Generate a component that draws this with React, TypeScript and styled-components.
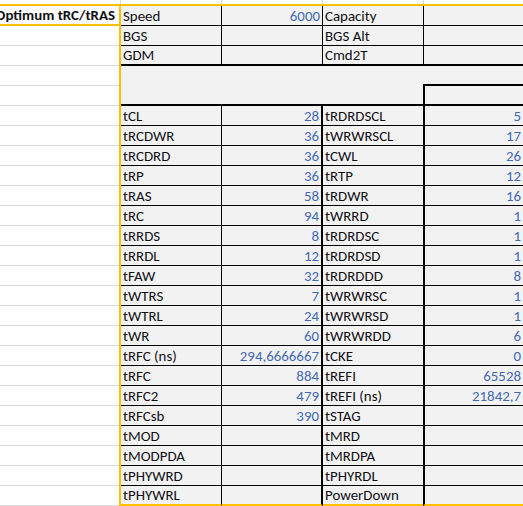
import React from "react";
import styled, { createGlobalStyle } from "styled-components";

const ORANGE = "#ffc000";
const GRID = "#d9d9d9";
const INK = "#0f0f14";
const NUM = "#4468b4";

const GlobalStyle = createGlobalStyle`
  html, body {
    margin: 0;
    padding: 0;
    background: #ffffff;
    overflow: hidden;
  }
  body {
    font-family: "Carlito", Lato, "Liberation Sans", sans-serif;
    font-size: 14.9px;
    color: ${INK};
  }
  * { box-sizing: border-box; }
`;

const Sheet = styled.div`
  width: 523px;
  height: 506px;
  display: flex;
  flex-direction: column;
  overflow: hidden;
`;

const TopStrip = styled.div`
  height: 4px;
  display: grid;
  grid-template-columns: 121px 101px 101px 101px 1fr;
`;

const TopCell = styled.div`
  border-right: 1px solid ${GRID};
`;

const Body = styled.div`
  flex: 1;
  display: flex;
  border-top: 2px solid ${ORANGE};
`;

const ColumnA = styled.div`
  width: 119px;
  display: flex;
  flex-direction: column;
  background: #ffffff;
`;

const ACell = styled.div<{ $title?: boolean }>`
  height: 20px;
  flex: none;
  display: flex;
  justify-content: flex-end;
  align-items: center;
  overflow: hidden;
  white-space: nowrap;
  padding-right: 4px;
  font-weight: ${(p) => (p.$title ? 700 : 400)};
  border-bottom: ${(p) => (p.$title ? `2px solid ${ORANGE}` : `1px solid ${GRID}`)};
  line-height: 18px;
`;

const Grid = styled.div`
  width: 404px;
  border-left: 2px solid ${ORANGE};
  background: #f2f2f2;
  display: grid;
  grid-template-columns: 101px 101px 100px 1fr;
  grid-auto-rows: 20px;
`;

type Line = "none" | "thin" | "thick" | "orange";

const line = (l?: Line) =>
  l === "thin"
    ? "1px solid #000"
    : l === "thick"
    ? "2px solid #000"
    : l === "orange"
    ? `2px solid ${ORANGE}`
    : "none";

const Cell = styled.div<{
  $num?: boolean;
  $span?: number;
  $right?: Line;
  $left?: Line;
  $bottom?: Line;
}>`
  grid-column: ${(p) => (p.$span ? `span ${p.$span}` : "auto")};
  display: flex;
  align-items: center;
  justify-content: ${(p) => (p.$num ? "flex-end" : "flex-start")};
  padding: 0 ${(p) => (p.$num ? "2px" : "0")} 0 ${(p) => (p.$num ? "0" : "2px")};
  white-space: nowrap;
  overflow: hidden;
  color: ${(p) => (p.$num ? NUM : INK)};
  line-height: 18px;
  border-right: ${(p) => line(p.$right)};
  border-left: ${(p) => line(p.$left)};
  border-bottom: ${(p) => line(p.$bottom)};
`;

const upper: [string, string, string, string][] = [
  ["Speed", "6000", "Capacity", ""],
  ["BGS", "", "BGS Alt", ""],
  ["GDM", "", "Cmd2T", ""],
];

const lower: [string, string, string, string][] = [
  ["tCL", "28", "tRDRDSCL", "5"],
  ["tRCDWR", "36", "tWRWRSCL", "17"],
  ["tRCDRD", "36", "tCWL", "26"],
  ["tRP", "36", "tRTP", "12"],
  ["tRAS", "58", "tRDWR", "16"],
  ["tRC", "94", "tWRRD", "1"],
  ["tRRDS", "8", "tRDRDSC", "1"],
  ["tRRDL", "12", "tRDRDSD", "1"],
  ["tFAW", "32", "tRDRDDD", "8"],
  ["tWTRS", "7", "tWRWRSC", "1"],
  ["tWTRL", "24", "tWRWRSD", "1"],
  ["tWR", "60", "tWRWRDD", "6"],
  ["tRFC (ns)", "294,6666667", "tCKE", "0"],
  ["tRFC", "884", "tREFI", "65528"],
  ["tRFC2", "479", "tREFI (ns)", "21842,7"],
  ["tRFCsb", "390", "tSTAG", ""],
  ["tMOD", "", "tMRD", ""],
  ["tMODPDA", "", "tMRDPA", ""],
  ["tPHYWRD", "", "tPHYRDL", ""],
  ["tPHYWRL", "", "PowerDown", ""],
];

export default function App() {
  const aRows = Array.from({ length: 24 });
  return (
    <>
      <GlobalStyle />
      <Sheet>
        <TopStrip>
          <TopCell />
          <TopCell />
          <TopCell />
          <TopCell />
          <div />
        </TopStrip>
        <Body>
          <ColumnA>
            <ACell $title>Optimum tRC/tRAS</ACell>
            {aRows.map((_, i) => (
              <ACell key={i} />
            ))}
          </ColumnA>
          <Grid>
            {upper.map((r, i) => {
              const b: Line = i === 2 ? "thick" : "thin";
              return (
                <React.Fragment key={`u${i}`}>
                  <Cell $right="thin" $bottom={b}>{r[0]}</Cell>
                  <Cell $num $right="thin" $bottom={b}>{r[1]}</Cell>
                  <Cell $bottom={b}>{r[2]}</Cell>
                  <Cell $num $left="thin" $bottom={b}>{r[3]}</Cell>
                </React.Fragment>
              );
            })}
            <Cell $span={3} />
            <Cell $bottom="thick" />
            <Cell $span={3} $bottom="thick" />
            <Cell $left="thick" $bottom="thick" />
            {lower.map((r, i) => {
              const b: Line = i === lower.length - 1 ? "orange" : "thin";
              return (
                <React.Fragment key={`l${i}`}>
                  <Cell $right="thin" $bottom={b}>{r[0]}</Cell>
                  <Cell $num $right="thick" $bottom={b}>{r[1]}</Cell>
                  <Cell $bottom={b}>{r[2]}</Cell>
                  <Cell $num $left="thick" $bottom={b}>{r[3]}</Cell>
                </React.Fragment>
              );
            })}
          </Grid>
        </Body>
      </Sheet>
    </>
  );
}
